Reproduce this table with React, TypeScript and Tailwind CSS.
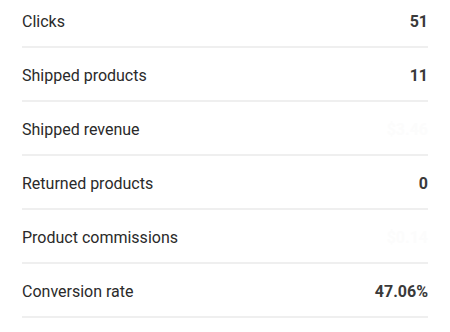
const rows = [
  { label: "Clicks", value: "51" },
  { label: "Shipped products", value: "11" },
  { label: "Shipped revenue", value: "$3.46", faint: true },
  { label: "Returned products", value: "0" },
  { label: "Product commissions", value: "$0.14", faint: true },
  { label: "Conversion rate", value: "47.06%" },
];

export default function App() {
  return (
    <div className="min-h-screen bg-white overflow-hidden" style={{ fontFamily: "Roboto, Arial, sans-serif" }}>
      <div className="-mt-[6px] px-[22px]">
        {rows.map((row) => (
          <div
            key={row.label}
            className="flex h-[54px] items-center justify-between border-b-2 border-[#efefef] pt-[3px] text-[16px]"
          >
            <span className="text-[#2a2a2a]">{row.label}</span>
            <span className={row.faint ? "font-bold text-[#fcfcfc]" : "font-bold text-[#3a3a3a]"}>
              {row.value}
            </span>
          </div>
        ))}
      </div>
    </div>
  );
}
